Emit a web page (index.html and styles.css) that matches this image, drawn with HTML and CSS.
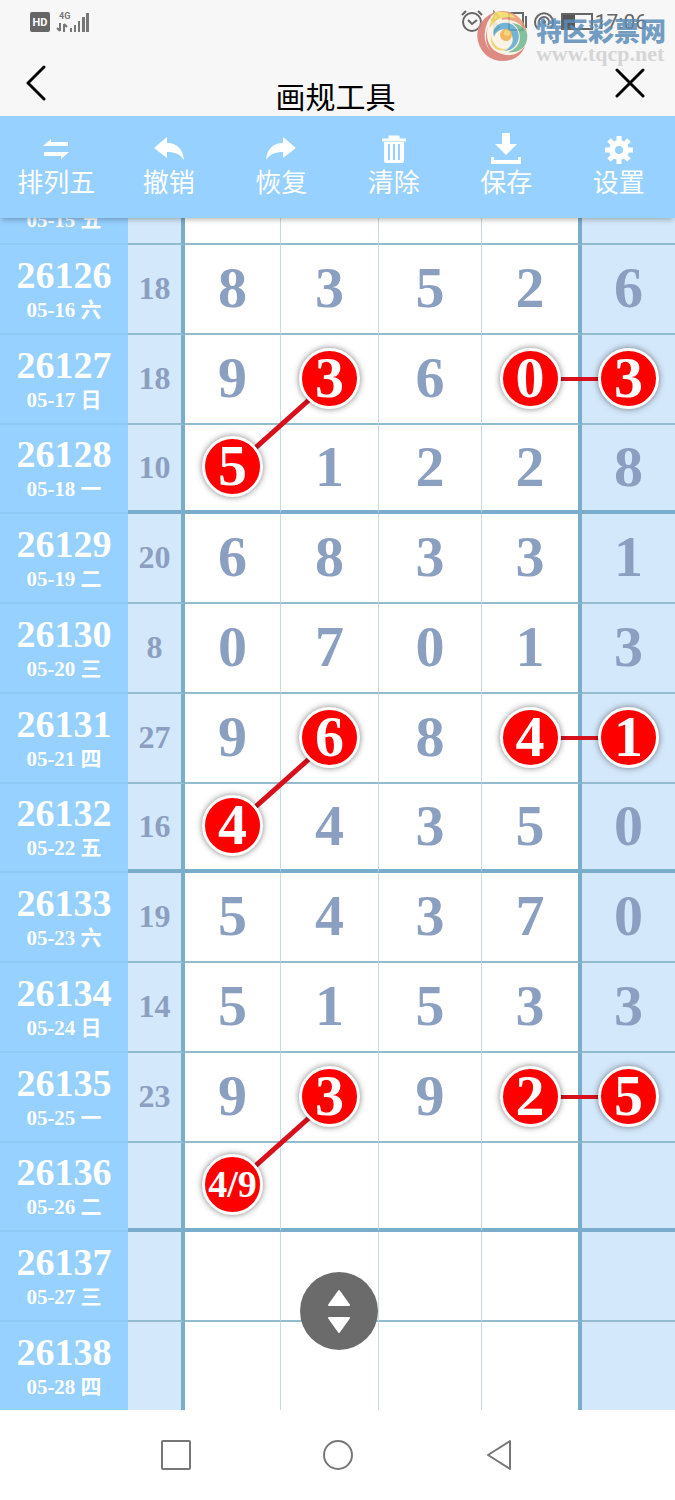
FILE: index.html
```html
<!DOCTYPE html>
<html lang="zh-CN">
<head>
  <meta charset="UTF-8" />
  <meta name="viewport" content="width=device-width, initial-scale=1.0" />
  <title>画规工具</title>
  <link rel="stylesheet" href="styles.css">
</head>
<body>
  <header class="top">
    <div class="status">
      <div class="status-side">
        <svg width="20" height="20" viewBox="0 0 20 20"><rect width="20" height="20" rx="2" fill="#666"/><text x="10" y="14" class="hd">HD</text></svg>
        <svg width="34" height="24" viewBox="0 0 34 24" fill="#777">
          <text x="3" y="9" class="net">4G</text>
          <path d="M4 13v8M1 18l3 3M8 22v-8M11 17l-3-3" stroke="#777" stroke-width="2" fill="none"/>
          <path d="M14 18h2v4h-2zM18 15h2v7h-2zM22 11h2v11h-2zM26 7h3v15h-3zM30 3h3v19h-3z"/>
        </svg>
      </div>
      <div class="status-side">
        <svg width="134" height="24" viewBox="0 0 134 24" fill="none" stroke="#666" stroke-width="2">
          <circle cx="11" cy="12" r="9"/><path d="M7 10l4 4 5-4M1 5l4-4M17 1l4 4"/>
          <path d="M28 7l10 10-5 5V2l5 5-10 10" stroke="#9b8a70"/>
          <path d="M48 3h14v17H48zM65 6v12"/>
          <path d="M76 18a9 9 0 1 1 14 0M79 15a5 5 0 1 1 8 0"/><circle cx="83" cy="12" r="1"/>
          <rect x="101" y="4" width="30" height="15"/><rect x="102" y="5" width="12" height="13" fill="#555" stroke="none"/>
        </svg>
        <span class="clock">17:06</span>
      </div>
    </div>
    <div class="watermark">
      <svg width="52" height="52" viewBox="0 0 52 52">
        <circle cx="26" cy="26" r="25" fill="#fbf3e4"/>
        <path d="M20 2C6 6-1 19 2 31c3 13 13 20 25 20C14 44 7 34 9 22 10 13 14 6 20 2z" fill="#d9776f"/>
        <path d="M20 2c14-4 28 5 31 20-6-9-15-14-25-12 0-4-3-7-6-8z" fill="#ea9773"/>
        <path d="M20 2c8-1 15 1 20 6-11-3-21 0-26 9 0-6 2-11 6-15z" fill="#f5dc62"/>
        <path d="M12 17c-4 13 3 26 18 28 8 1 15-3 19-9-3 9-11 15-22 15C14 46 6 32 12 17z" fill="#d9786f"/>
        <path d="M51 23c2 12-6 21-19 19 9-3 14-10 11-20-1-4-4-7-7-9 8 1 13 5 15 10z" fill="#6fb78c"/>
        <path d="M18 27c-3-9 5-16 14-14 10 2 14 14 8 22-3 4-7 6-12 6 8-4 11-11 7-17-4-7-14-6-17 3z" fill="#5ca9cf"/>
        <path d="M15 25c2 12 10 16 18 13-9 6-20 1-18-13z" fill="#f0cf66"/>
        <circle cx="30" cy="25" r="6" fill="#f2ad45"/><circle cx="31" cy="23" r="3" fill="#f8d26a"/>
      </svg>
      <div class="watermark-text">
        <span class="watermark-name">特区彩票网</span>
        <span class="watermark-url">www.tqcp.net</span>
      </div>
    </div>
    <div class="title-bar">
      <button class="icon-btn" aria-label="返回"><svg width="20" height="36" viewBox="0 0 20 36"><path d="M18 2L2 18l16 16"/></svg></button>
      <h1>画规工具</h1>
      <button class="icon-btn" aria-label="关闭"><svg width="30" height="30" viewBox="0 0 30 30"><path d="M2 2l26 26M28 2L2 28"/></svg></button>
    </div>
  </header>

  <nav class="toolbar">
    <button><svg width="28" height="32" viewBox="0 0 28 32"><path d="M1 13L9 6v3h17v4zM27 19l-8 7v-3H2v-4z"/></svg>排列五</button>
    <button><svg width="30" height="32" viewBox="0 0 30 32"><path d="M0 15L13 4v6c10 0 16 6 17 17-4-6-9-8-17-8v6z"/></svg>撤销</button>
    <button><svg width="30" height="32" viewBox="0 0 30 32"><path d="M30 15L17 4v6C7 10 1 16 0 27c4-6 9-8 17-8v6z"/></svg>恢复</button>
    <button><svg width="26" height="32" viewBox="0 0 26 32"><path d="M9 6V4h8v2M1 7h24" fill="none" stroke="#fff" stroke-width="3"/><path d="M3 9h20v19q0 2-2 2H5q-2 0-2-2z"/><path d="M8 11v16M13 11v16M18 11v16" stroke="#96d1ff" stroke-width="2"/></svg>清除</button>
    <button><svg width="32" height="32" viewBox="0 0 32 32"><path d="M12 0h8v11h7L16 22 5 11h7zM1 24h3v3h24v-3h3v7H1z"/></svg>保存</button>
    <button><svg width="28" height="32" viewBox="0 0 28 32"><circle cx="14" cy="17" r="7" fill="none" stroke="#fff" stroke-width="6"/><path d="M14 3v6M14 25v6M0 17h6M22 17h6M4 7l4 4M20 23l4 4M24 7l-4 4M8 23l-4 4" stroke="#fff" stroke-width="5"/></svg>设置</button>
  </nav>

  <main class="chart">
    <table>
      <colgroup><col class="c-issue"><col class="c-sum"><col class="c-n1"><col class="c-n2"><col class="c-n3"><col class="c-n4"><col class="c-n5"></colgroup>
      <tbody>
        <tr class="partial"><th><small>05-15 五</small></th><td></td><td></td><td></td><td></td><td></td><td></td></tr>
        <tr><th>26126<small>05-16 六</small></th><td>18</td><td>8</td><td>3</td><td>5</td><td>2</td><td>6</td></tr>
        <tr><th>26127<small>05-17 日</small></th><td>18</td><td>9</td><td><span class="ball">3</span></td><td>6</td><td><i class="link-h"></i><span class="ball">0</span></td><td><span class="ball">3</span></td></tr>
        <tr class="group-end"><th>26128<small>05-18 一</small></th><td>10</td><td><svg class="link-d"><line x1="0" y1="100%" x2="100%" y2="0"/></svg><span class="ball">5</span></td><td>1</td><td>2</td><td>2</td><td>8</td></tr>
        <tr><th>26129<small>05-19 二</small></th><td>20</td><td>6</td><td>8</td><td>3</td><td>3</td><td>1</td></tr>
        <tr><th>26130<small>05-20 三</small></th><td>8</td><td>0</td><td>7</td><td>0</td><td>1</td><td>3</td></tr>
        <tr><th>26131<small>05-21 四</small></th><td>27</td><td>9</td><td><span class="ball">6</span></td><td>8</td><td><i class="link-h"></i><span class="ball">4</span></td><td><span class="ball">1</span></td></tr>
        <tr class="group-end"><th>26132<small>05-22 五</small></th><td>16</td><td><svg class="link-d"><line x1="0" y1="100%" x2="100%" y2="0"/></svg><span class="ball">4</span></td><td>4</td><td>3</td><td>5</td><td>0</td></tr>
        <tr><th>26133<small>05-23 六</small></th><td>19</td><td>5</td><td>4</td><td>3</td><td>7</td><td>0</td></tr>
        <tr><th>26134<small>05-24 日</small></th><td>14</td><td>5</td><td>1</td><td>5</td><td>3</td><td>3</td></tr>
        <tr><th>26135<small>05-25 一</small></th><td>23</td><td>9</td><td><span class="ball">3</span></td><td>9</td><td><i class="link-h"></i><span class="ball">2</span></td><td><span class="ball">5</span></td></tr>
        <tr class="group-end"><th>26136<small>05-26 二</small></th><td></td><td><svg class="link-d"><line x1="0" y1="100%" x2="100%" y2="0"/></svg><span class="ball pair">4/9</span></td><td></td><td></td><td></td><td></td></tr>
        <tr><th>26137<small>05-27 三</small></th><td></td><td></td><td></td><td></td><td></td><td></td></tr>
        <tr><th>26138<small>05-28 四</small></th><td></td><td></td><td></td><td></td><td></td><td></td></tr>
      </tbody>
    </table>
    <button class="scroll-btn" aria-label="上下滚动"><svg width="24" height="44" viewBox="0 0 24 44"><path d="M12 2l10 14H2zM2 29h20L12 43z" stroke-width="2" stroke-linejoin="round"/></svg></button>
  </main>

  <footer class="sys-nav">
    <button aria-label="最近任务"><svg width="32" height="32" viewBox="0 0 32 32"><rect x="2" y="2" width="28" height="28" rx="1"/></svg></button>
    <button aria-label="主页"><svg width="32" height="32" viewBox="0 0 32 32"><circle cx="16" cy="16" r="14"/></svg></button>
    <button aria-label="返回键"><svg width="32" height="32" viewBox="0 0 32 32"><path d="M27 2v28L5 16z" stroke-linejoin="round"/></svg></button>
  </footer>
</body>
</html>
```

FILE: styles.css
```css
:root {
  --blue: #96d1ff;
  --pale: #d4e8fb;
  --line: #94bccf;
  --line-bold: #7aaccb;
  --digit: #8b9fc0;
  --red: #fe0000;
  --link: #d8101c;
}

* {
  box-sizing: border-box;
}

body {
  margin: 0;
  height: 100vh;
  display: flex;
  flex-direction: column;
  background: #fff;
  font-family: "Noto Sans CJK SC", sans-serif;
}

button {
  border: none;
  padding: 0;
  background: none;
  font-family: inherit;
  cursor: pointer;
}

/* status bar and title */
.top {
  position: relative;
  height: 116px;
  flex: none;
  background: #f7f7f7;
}

.status {
  display: flex;
  justify-content: space-between;
  padding: 10px 28px 0 30px;
  height: 48px;
}

.status-side {
  display: flex;
  align-items: center;
  gap: 6px;
  height: 24px;
}

.status-side:last-child {
  gap: 0;
}

.hd {
  font: bold 11px Roboto, sans-serif;
  fill: #fff;
  text-anchor: middle;
}

.net {
  font: bold 9px Roboto, sans-serif;
}

.clock {
  font: 21px Roboto, sans-serif;
  color: #666;
}

.watermark {
  position: absolute;
  top: 10px;
  right: 9px;
  display: flex;
  gap: 8px;
  opacity: 0.85;
}

.watermark-text {
  display: flex;
  flex-direction: column;
}

.watermark-name {
  font-size: 26px;
  line-height: 40px;
  height: 34px;
  font-weight: 900;
  color: #5c8db8;
}

.watermark-url {
  font: bold 22px/20px "Liberation Serif", serif;
  color: #d0d0d0;
}

.title-bar {
  display: grid;
  grid-template-columns: 1fr auto 1fr;
  padding: 17px 30px 0 26px;
}

.title-bar h1 {
  margin: 8px 0 0;
  font-size: 30px;
  line-height: 44px;
  font-weight: 400;
}

.icon-btn {
  height: 36px;
}

.icon-btn:first-child {
  justify-self: start;
}

.icon-btn:last-child {
  justify-self: end;
}

.icon-btn svg {
  display: block;
  fill: none;
  stroke: #000;
  stroke-width: 3;
  stroke-linecap: round;
  stroke-linejoin: round;
}

/* tools */
.toolbar {
  position: relative;
  z-index: 4;
  flex: none;
  display: grid;
  grid-template-columns: repeat(6, 1fr);
  height: 102px;
  background: var(--blue);
  box-shadow: 0 4px 5px -2px rgba(0, 0, 0, 0.25);
}

.toolbar button {
  display: flex;
  flex-direction: column;
  align-items: center;
  padding-top: 17px;
  color: #fff;
  font-size: 26px;
  line-height: 32px;
}

.toolbar svg {
  fill: #fff;
}

/* number chart */
.chart {
  position: relative;
  z-index: 0;
  flex: 1;
  min-height: 0;
  overflow: hidden;
}

table {
  width: 100%;
  margin-top: -63px;
  table-layout: fixed;
  border-collapse: separate;
  border-spacing: 0;
  font-family: "Liberation Serif", "Noto Sans CJK SC", serif;
  font-weight: bold;
}

.c-issue { width: 128px; }
.c-sum { width: 57px; }
.c-n1 { width: 96px; }
.c-n2 { width: 98px; }
.c-n3 { width: 103px; }
.c-n4 { width: 100px; }
.c-n5 { width: 93px; }

tr {
  height: 90px;
}

.group-end {
  height: 89px;
}

th,
td {
  position: relative;
  padding: 0;
  text-align: center;
  border-bottom: 2px solid var(--line);
}

th {
  padding-top: 1px;
  background: var(--blue);
  border-bottom-color: #8fcaf5;
  color: #fff;
  font-size: 38px;
  line-height: 40px;
}

th small {
  display: block;
  font-size: 21px;
  line-height: 30px;
}

.partial th {
  padding-bottom: 8px;
  vertical-align: bottom;
}

td {
  padding-bottom: 2px;
  border-right: 1px solid #c9dae6;
  color: var(--digit);
  font-size: 58px;
  line-height: 60px;
}

td:nth-child(2) {
  background: var(--pale);
  border-right: 4px solid var(--line-bold);
  font-size: 32px;
}

td:nth-child(6) {
  border-right: 4px solid var(--line-bold);
}

td:nth-child(7) {
  background: var(--pale);
  border-right: none;
}

.group-end td {
  border-bottom: 4px solid var(--line-bold);
}

.ball {
  position: relative;
  z-index: 2;
  display: block;
  width: 61px;
  height: 61px;
  margin: 0 auto;
  border: 3px solid #fff;
  border-radius: 50%;
  background: var(--red);
  box-shadow: 0 0 6px rgba(0, 0, 0, 0.5);
  color: #fff;
  line-height: 54px;
}

.pair {
  font-size: 38px;
}

/* connectors run from the middle of their own cell to a neighbour */
.link-h {
  position: absolute;
  z-index: 1;
  top: 50%;
  left: 50%;
  width: 100%;
  height: 4px;
  margin-top: -2px;
  background: var(--link);
}

.link-d {
  position: absolute;
  z-index: 1;
  left: 50%;
  bottom: 50%;
  width: 100%;
  height: 100%;
  stroke: var(--link);
  stroke-width: 5;
}

.scroll-btn {
  position: absolute;
  z-index: 3;
  left: 50%;
  bottom: 60px;
  width: 78px;
  height: 78px;
  margin-left: -38px;
  border-radius: 50%;
  background: #6b6b6b;
}

.scroll-btn svg {
  display: block;
  margin: auto;
  fill: #fff;
  stroke: #fff;
}

/* system navigation */
.sys-nav {
  flex: none;
  display: flex;
  justify-content: space-between;
  padding: 0 160px;
  height: 90px;
  background: #fff;
}

.sys-nav svg {
  display: block;
  fill: none;
  stroke: #777;
  stroke-width: 2;
}
```
